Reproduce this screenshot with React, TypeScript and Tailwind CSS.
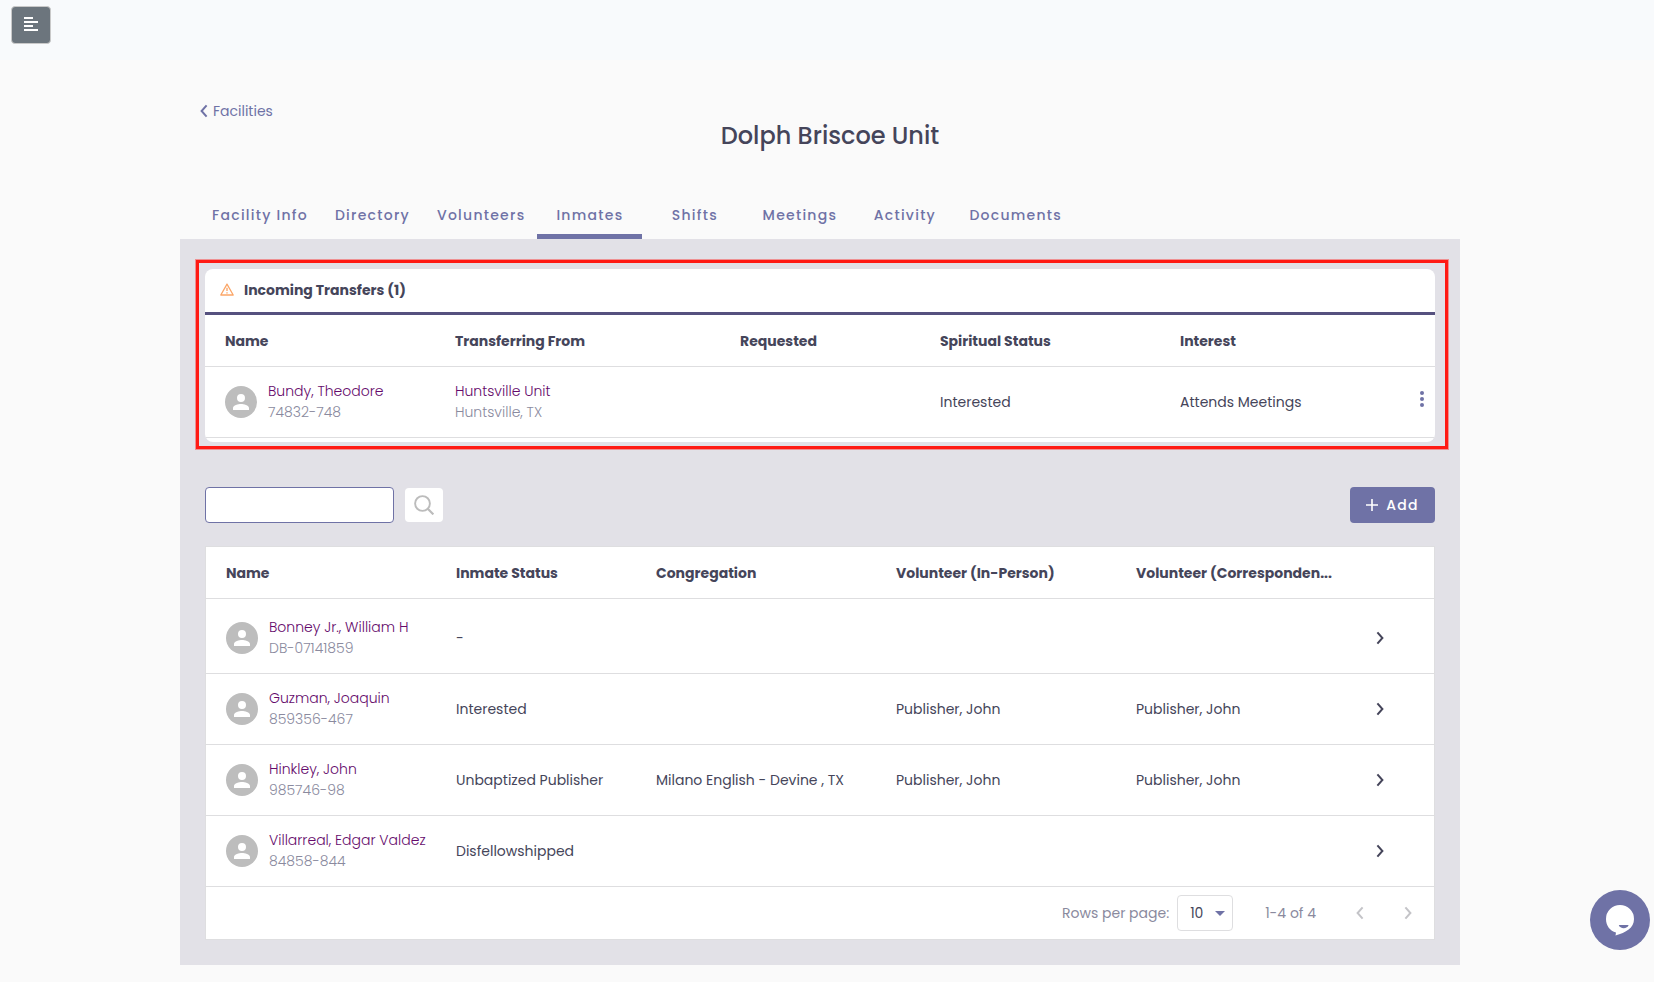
import React, { useState } from 'react';

const FONT = "font-['Poppins','Inter',sans-serif]";

interface Transfer {
  name: string;
  number: string;
  facility: string;
  location: string;
  requested: string;
  status: string;
  interest: string;
}

interface Inmate {
  name: string;
  number: string;
  status: string;
  congregation: string;
  inPerson: string;
  correspondence: string;
}

const tabs = [
  'Facility Info',
  'Directory',
  'Volunteers',
  'Inmates',
  'Shifts',
  'Meetings',
  'Activity',
  'Documents',
];

const transfers: Transfer[] = [
  {
    name: 'Bundy, Theodore',
    number: '74832-748',
    facility: 'Huntsville Unit',
    location: 'Huntsville, TX',
    requested: '',
    status: 'Interested',
    interest: 'Attends Meetings',
  },
];

const inmates: Inmate[] = [
  { name: 'Bonney Jr., William H', number: 'DB-07141859', status: '-', congregation: '', inPerson: '', correspondence: '' },
  { name: 'Guzman, Joaquin', number: '859356-467', status: 'Interested', congregation: '', inPerson: 'Publisher, John', correspondence: 'Publisher, John' },
  { name: 'Hinkley, John', number: '985746-98', status: 'Unbaptized Publisher', congregation: 'Milano English - Devine , TX', inPerson: 'Publisher, John', correspondence: 'Publisher, John' },
  { name: 'Villarreal, Edgar Valdez', number: '84858-844', status: 'Disfellowshipped', congregation: '', inPerson: '', correspondence: '' },
];

const Chevron: React.FC<{ direction: 'left' | 'right' }> = ({ direction }) => (
  <svg viewBox="0 0 8 14" className="h-[14px] w-2" fill="none" stroke="currentColor" strokeWidth="2" aria-hidden="true">
    {direction === 'left' ? <path d="M6.6 1.4 1.6 7l5 5.600" /> : <path d="M1.4 1.4 6.4 7l-5 5.600" />}
  </svg>
);

const Avatar: React.FC = () => (
  <svg viewBox="0 0 32 32" className="h-8 w-8 shrink-0" aria-hidden="true">
    <circle cx="16" cy="16" r="16" fill="#bdbdbd" />
    <path
      d="M16 16a4 4 0 1 0 0-8 4 4 0 0 0 0 8Zm0 2c-2.700 0-8 1.340-8 4v2h16v-2c0-2.660-5.300-4-8-4Z"
      fill="#fff"
    />
  </svg>
);

const NameCell: React.FC<{ name: string; number: string }> = ({ name, number }) => (
  <div className="flex items-center gap-[11px]">
    <Avatar />
    <div className="whitespace-nowrap font-light leading-[21px]">
      <a href="#inmate" className="block text-[#650a6b]">{name}</a>
      <span className="block text-[#8a8a9e]">{number}</span>
    </div>
  </div>
);

const HeadCell: React.FC<{ children?: React.ReactNode }> = ({ children }) => (
  <th scope="col" className="h-[52px] truncate border-b border-[#dedee0] px-5 text-left font-bold">
    {children}
  </th>
);

const Cell: React.FC<{ children?: React.ReactNode }> = ({ children }) => (
  <td className="h-[71px] border-b border-[#dedee0] px-5">{children}</td>
);

const IncomingTransfers: React.FC = () => (
  <section className="relative">
    <div className="overflow-hidden rounded-lg bg-white pb-1">
      <h2 className="flex h-[46px] items-center gap-[10px] border-b-[3px] border-[#56517f] px-[15px] pb-[2px] font-bold">
        <svg viewBox="0 0 14 13" className="h-[13px] w-[14px]" fill="none" stroke="#fba668" aria-hidden="true">
          <path d="M7 1.100.8 12h12.400L7 1.100Z" strokeWidth="1.300" strokeLinejoin="round" />
          <path d="M7 4.800v3.200M7 9.300v1.200" strokeWidth="1.400" />
        </svg>
        Incoming Transfers (1)
      </h2>
      <table className="w-full table-fixed border-separate border-spacing-0">
        <colgroup>
          <col className="w-[230px]" />
          <col className="w-[285px]" />
          <col className="w-[200px]" />
          <col className="w-[240px]" />
          <col className="w-[230px]" />
          <col />
        </colgroup>
        <thead>
          <tr>
            <HeadCell>Name</HeadCell>
            <HeadCell>Transferring From</HeadCell>
            <HeadCell>Requested</HeadCell>
            <HeadCell>Spiritual Status</HeadCell>
            <HeadCell>Interest</HeadCell>
            <th className="border-b border-[#dedee0]" />
          </tr>
        </thead>
        <tbody>
          {transfers.map((row) => (
            <tr key={row.number}>
              <Cell><NameCell name={row.name} number={row.number} /></Cell>
              <Cell>
                <div className="font-light leading-[21px]">
                  <a href="#facility" className="block text-[#650a6b]">{row.facility}</a>
                  <span className="block text-[#8a8a9e]">{row.location}</span>
                </div>
              </Cell>
              <Cell>{row.requested}</Cell>
              <Cell>{row.status}</Cell>
              <Cell>{row.interest}</Cell>
              <td className="border-b border-[#dedee0] pr-[11px] pb-2 text-right">
                <button type="button" aria-label="Transfer actions" className="align-middle text-[#6f72a6]">
                  <svg viewBox="0 0 4 16" className="h-4 w-1" fill="currentColor" aria-hidden="true">
                    <circle cx="2" cy="2" r="2" />
                    <circle cx="2" cy="8" r="2" />
                    <circle cx="2" cy="14" r="2" />
                  </svg>
                </button>
              </td>
            </tr>
          ))}
        </tbody>
      </table>
    </div>
    {/* highlight frame around the card */}
    <div className="pointer-events-none absolute -top-[9px] -right-[13px] -bottom-[7px] -left-[9px] border-[3px] border-[#ff1a14] ring-1 ring-[#ff1a14]/40" />
  </section>
);

const Toolbar: React.FC = () => {
  const [query, setQuery] = useState('');

  return (
    <div className="mt-[45px] flex items-center">
      <input
        type="text"
        aria-label="Search inmates"
        value={query}
        onChange={(e) => setQuery(e.target.value)}
        className="h-9 w-[189px] rounded border border-[#6f72a6] bg-white px-2 outline-none"
      />
      <button type="button" aria-label="Search" className="ml-[11px] flex h-[34px] w-[38px] items-center justify-center rounded bg-white">
        <svg viewBox="0 0 20 20" className="h-5 w-5" fill="none" stroke="#bcbcbc" strokeWidth="1.900" aria-hidden="true">
          <circle cx="8.500" cy="8.500" r="7.400" />
          <path d="m13.700 13.700 5.700 5.700" strokeWidth="2.200" />
        </svg>
      </button>
      <button type="button" className="ml-auto flex h-9 w-[85px] items-center justify-center gap-2 rounded bg-[#6f72a6] font-medium tracking-[0.09em] text-white">
        <svg viewBox="0 0 12 12" className="h-3 w-3" stroke="currentColor" strokeWidth="1.600" aria-hidden="true">
          <path d="M6 0v12M0 6h12" />
        </svg>
        Add
      </button>
    </div>
  );
};

const InmateTable: React.FC = () => {
  const [rowsPerPage, setRowsPerPage] = useState('10');

  return (
    <section className="mt-[23px] border border-[#dedee0] bg-white">
      <table className="w-full table-fixed border-separate border-spacing-0">
        <colgroup>
          <col className="w-[230px]" />
          <col className="w-[200px]" />
          <col className="w-[240px]" />
          <col className="w-[240px]" />
          <col className="w-[240px]" />
          <col />
        </colgroup>
        <thead>
          <tr>
            <HeadCell>Name</HeadCell>
            <HeadCell>Inmate Status</HeadCell>
            <HeadCell>Congregation</HeadCell>
            <HeadCell>Volunteer (In-Person)</HeadCell>
            <HeadCell>Volunteer (Corresponden...</HeadCell>
            <th className="border-b border-[#dedee0]" />
          </tr>
        </thead>
        <tbody className="before:block before:h-1">
          {inmates.map((row) => (
            <tr key={row.number}>
              <Cell><NameCell name={row.name} number={row.number} /></Cell>
              <Cell>{row.status}</Cell>
              <Cell><span className="whitespace-nowrap">{row.congregation}</span></Cell>
              <Cell>{row.inPerson}</Cell>
              <Cell>{row.correspondence}</Cell>
              <Cell>
                <button type="button" aria-label={`Open ${row.name}`} className="flex">
                  <Chevron direction="right" />
                </button>
              </Cell>
            </tr>
          ))}
        </tbody>
      </table>
      <div className="flex h-[52px] items-center justify-end pr-[22px] text-[#8a8a9e]">
        <label htmlFor="rows-per-page">Rows per page:</label>
        <div className="relative ml-2">
          <select
            id="rows-per-page"
            value={rowsPerPage}
            onChange={(e) => setRowsPerPage(e.target.value)}
            className="block h-9 w-14 appearance-none rounded border border-[#dedee0] bg-white pl-3 text-[#45455a]"
          >
            <option>10</option>
            <option>25</option>
            <option>50</option>
          </select>
          <svg viewBox="0 0 10 5" className="pointer-events-none absolute top-4 right-2 h-[5px] w-[10px]" fill="#6f72a6" aria-hidden="true">
            <path d="M0 0h10L5 5Z" />
          </svg>
        </div>
        <span className="ml-8">1-4 of 4</span>
        <button type="button" aria-label="Previous page" className="ml-10 text-[#c4c4c8]">
          <Chevron direction="left" />
        </button>
        <button type="button" aria-label="Next page" className="ml-10 text-[#c4c4c8]">
          <Chevron direction="right" />
        </button>
      </div>
    </section>
  );
};

export default function App() {
  const [activeTab, setActiveTab] = useState('Inmates');

  return (
    <div className={`min-h-screen bg-[#fafafa] text-sm text-[#45455a] ${FONT}`}>
      <header className="h-[60px] bg-[#f8fafc] px-[11px] pt-[6px]">
        <button
          type="button"
          aria-label="Toggle menu"
          className="flex h-[38px] w-10 items-center justify-center rounded border border-[#c9c9c9] bg-[#6c757d] pb-[2px]"
        >
          <svg viewBox="0 0 14 14" className="h-[14px] w-[14px]" fill="#fff" aria-hidden="true">
            <path d="M0 0h9v2H0zM0 4h14v2H0zM0 8h9v2H0zM0 12h14v2H0z" />
          </svg>
        </button>
      </header>

      <main className="pr-[14px] pb-4">
        <div className="mx-auto max-w-7xl">
          <div className="px-5 pt-10">
            <a href="#facilities" className="flex w-fit items-center gap-[5px] leading-[22px] text-[#6f72a6]">
              <Chevron direction="left" />
              Facilities
            </a>
            <h1 className="-mt-1 pl-5 text-center text-2xl leading-9 font-medium">Dolph Briscoe Unit</h1>
            <nav className="mt-9 flex">
              {tabs.map((tab) => (
                <button
                  key={tab}
                  type="button"
                  onClick={() => setActiveTab(tab)}
                  className={`h-[49px] min-w-[105px] border-b-[5px] px-3 pt-[6px] font-medium tracking-[0.09em] whitespace-nowrap text-[#6f72a6] ${
                    activeTab === tab ? 'border-[#6f72a6]' : 'border-transparent'
                  }`}
                >
                  {tab}
                </button>
              ))}
            </nav>
          </div>
          <div className="bg-[#e2e1e7] px-[25px] pt-[30px] pb-[25px]">
            <IncomingTransfers />
            <Toolbar />
            <InmateTable />
          </div>
        </div>
      </main>

      <button
        type="button"
        aria-label="Open chat"
        className="fixed right-1 bottom-8 flex h-[60px] w-[60px] items-center justify-center rounded-full bg-[#6f72a6]"
      >
        <svg viewBox="0 0 28 31" className="h-[31px] w-7" aria-hidden="true">
          <path d="M14 0a14 14 0 0 1 14 14c0 9-8 13.500-18.500 16.500l.5-3C4 26 0 20.500 0 14A14 14 0 0 1 14 0Z" fill="#fff" />
          <path d="M12.800 20h9.800c-1 4.200-8.800 4.200-9.800 0Z" fill="#6f72a6" />
        </svg>
      </button>
    </div>
  );
}
